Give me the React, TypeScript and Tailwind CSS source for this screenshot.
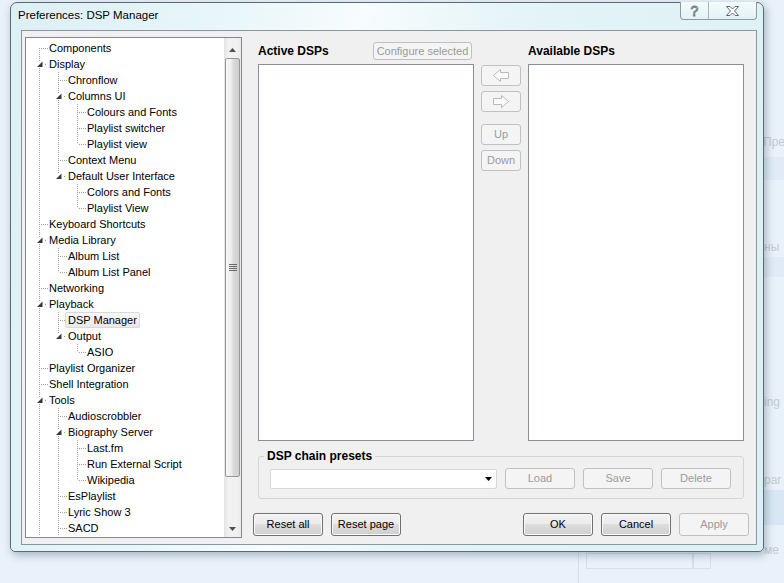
import React from 'react';

type TreeRow = { label: string; level: number; expanded?: boolean; hidden?: boolean; selected?: boolean };

const rows: TreeRow[] = [
  { label: 'Components', level: 0 },
  { label: 'Display', level: 0, expanded: true },
  { label: 'Chronflow', level: 1 },
  { label: 'Columns UI', level: 1, expanded: true },
  { label: 'Colours and Fonts', level: 2 },
  { label: 'Playlist switcher', level: 2 },
  { label: 'Playlist view', level: 2 },
  { label: 'Context Menu', level: 1 },
  { label: 'Default User Interface', level: 1, expanded: true },
  { label: 'Colors and Fonts', level: 2 },
  { label: 'Playlist View', level: 2 },
  { label: 'Keyboard Shortcuts', level: 0 },
  { label: 'Media Library', level: 0, expanded: true },
  { label: 'Album List', level: 1 },
  { label: 'Album List Panel', level: 1 },
  { label: 'Networking', level: 0 },
  { label: 'Playback', level: 0, expanded: true },
  { label: 'DSP Manager', level: 1, selected: true },
  { label: 'Output', level: 1, expanded: true },
  { label: 'ASIO', level: 2 },
  { label: 'Playlist Organizer', level: 0 },
  { label: 'Shell Integration', level: 0 },
  { label: 'Tools', level: 0, expanded: true },
  { label: 'Audioscrobbler', level: 1 },
  { label: 'Biography Server', level: 1, expanded: true },
  { label: 'Last.fm', level: 2 },
  { label: 'Run External Script', level: 2 },
  { label: 'Wikipedia', level: 2 },
  { label: 'EsPlaylist', level: 1 },
  { label: 'Lyric Show 3', level: 1 },
  { label: 'SACD', level: 1 },
  // scrolled out of view, only here so the guide lines keep going
  { label: '', level: 1, hidden: true },
  { label: '', level: 0, hidden: true },
];

// is there a later sibling at depth d before the branch closes?
function continues(i: number, d: number) {
  for (let j = i + 1; j < rows.length; j++) {
    if (rows[j].level <= d) return rows[j].level === d;
  }
  return false;
}

const dot = { stroke: '#a0a0a0', strokeDasharray: '1 1', shapeRendering: 'crispEdges' as const };

function Guides({ i }: { i: number }) {
  const row = rows[i];
  const w = (row.level + 1) * 19 + 1;
  const cx = row.level * 19 + 13.5;
  const lines: React.ReactNode[] = [];
  for (let d = 0; d < row.level; d++) {
    if (continues(i, d)) lines.push(<line key={d} x1={d * 19 + 13.5} y1={0} x2={d * 19 + 13.5} y2={16} {...dot} />);
  }
  const below = continues(i, row.level);
  if (row.expanded) {
    lines.push(<line key="t" x1={cx} y1={0} x2={cx} y2={5} {...dot} />);
    if (below) lines.push(<line key="b" x1={cx} y1={12} x2={cx} y2={16} {...dot} />);
    lines.push(<polygon key="tri" points={`${cx + 3},5.5 ${cx + 3},11 ${cx - 2.5},11`} fill="#3a3a3a" />);
    lines.push(<rect key="d" x={w - 1} y={8} width={1} height={1} fill="#a0a0a0" />);
  } else {
    if (i > 0) lines.push(<line key="t" x1={cx} y1={0} x2={cx} y2={8} {...dot} />);
    if (below) lines.push(<line key="b" x1={cx} y1={8} x2={cx} y2={16} {...dot} />);
    lines.push(<line key="h" x1={cx + 1} y1={8.5} x2={w + 2} y2={8.5} {...dot} />);
  }
  return (
    <svg width={w} height={16} className="shrink-0 overflow-visible">
      {lines}
    </svg>
  );
}

function Tree() {
  return (
    <div className="flex h-[501px] w-[217px] shrink-0 border border-[#828790] bg-white">
      <div className="flex-1 overflow-hidden pt-[2px]">
        {rows.map((r, i) =>
          r.hidden ? null : (
            <div key={i} className="flex h-[16px] items-center">
              <Guides i={i} />
              <span
                className={`relative z-10 h-[16px] whitespace-nowrap rounded-[2px] border px-[2px] text-[11px] leading-[14px] text-black ${
                  r.selected ? 'border-[#d9d9d9] bg-[linear-gradient(to_bottom,#f8f8f8,#e9e9e9)]' : 'border-transparent'
                }`}
              >
                {r.label}
              </span>
            </div>
          )
        )}
      </div>
      <Scrollbar />
    </div>
  );
}

function Scrollbar() {
  return (
    <div className="flex w-[17px] flex-col bg-[linear-gradient(to_right,#e3e3e3,#f1f1f1_25%,#f1f1f1_75%,#e9e9e9)]">
      <div className="flex h-[17px] justify-center pt-[10px]">
        <svg width="7" height="4">
          <polygon points="3.5,0 7,4 0,4" fill="#4f4f4f" />
        </svg>
      </div>
      <div className="flex-1 px-[1px] pb-[43px] pt-[3px]">
        <div className="flex h-full items-center justify-center rounded-[2px] border border-[#979797] bg-[linear-gradient(to_right,#f6f6f6,#ececec_45%,#dadada_55%,#cfcfcf)]">
          <svg width="8" height="7">
            {[0.5, 2.5, 4.5, 6.5].map((y) => (
              <line key={y} x1={0} y1={y} x2={8} y2={y} stroke="#6a6a6a" shapeRendering="crispEdges" />
            ))}
          </svg>
        </div>
      </div>
      <div className="flex h-[17px] justify-center pt-[7px]">
        <svg width="7" height="4">
          <polygon points="0,0 7,0 3.5,4" fill="#4f4f4f" />
        </svg>
      </div>
    </div>
  );
}

function Btn({ children, disabled, className = '' }: { children: React.ReactNode; disabled?: boolean; className?: string }) {
  return (
    <button
      type="button"
      className={`flex shrink-0 items-center justify-center rounded-[3px] border text-[11px] ${
        disabled
          ? 'border-[#bcc1c4] bg-[#f4f4f4] text-[#9b9b9b]'
          : 'border-[#707070] bg-[linear-gradient(to_bottom,#f2f2f2_0%,#ebebeb_50%,#dddddd_50%,#cfcfcf_100%)] text-black shadow-[inset_0_0_0_1px_#fbfbfb]'
      } ${className}`}
    >
      {children}
    </button>
  );
}

function HollowArrow({ dir }: { dir: 'left' | 'right' }) {
  return (
    <svg width="16" height="13" className={dir === 'right' ? '-scale-x-100' : ''}>
      <polygon points="0.5,6.5 7.5,0.5 7.5,3.5 15.5,3.5 15.5,9.5 7.5,9.5 7.5,12.5" fill="#fbfbfb" stroke="#b9b9b9" />
    </svg>
  );
}

function ListBox() {
  return <div className="h-[377px] w-[216px] border border-[#8a8f97] bg-white" />;
}

function DspPanel() {
  return (
    <div className="flex flex-1 flex-col pt-[11px]">
      <div className="flex pl-[16px]">
        <div className="flex w-[216px] flex-col">
          <div className="flex h-[22px] items-start justify-between pr-[2px]">
            <span className="flex h-[18px] items-center text-[12px] font-bold">Active DSPs</span>
            <Btn disabled className="h-[18px] w-[99px]">
              Configure selected
            </Btn>
          </div>
          <ListBox />
        </div>
        <div className="flex w-[54px] flex-col pl-[7px] pt-[23px]">
          <Btn disabled className="h-[21px] w-[40px]">
            <HollowArrow dir="left" />
          </Btn>
          <Btn disabled className="mt-[5px] h-[21px] w-[40px]">
            <HollowArrow dir="right" />
          </Btn>
          <Btn disabled className="mt-[12px] h-[21px] w-[40px]">
            Up
          </Btn>
          <Btn disabled className="mt-[5px] h-[21px] w-[40px]">
            Down
          </Btn>
        </div>
        <div className="flex w-[216px] flex-col">
          <div className="flex h-[22px] items-start">
            <span className="flex h-[18px] items-center text-[12px] font-bold">Available DSPs</span>
          </div>
          <ListBox />
        </div>
      </div>

      <fieldset className="ml-[16px] mt-[8px] w-[486px] rounded-[3px] border border-[#d5d5d5] px-0 pb-[9px] pt-[5px]">
        <legend className="ml-[5px] px-[3px] text-[12px] font-bold leading-[14px]">DSP chain presets</legend>
        <div className="flex items-center pl-[11px]">
          <div className="flex h-[20px] w-[227px] items-center justify-end rounded-[2px] border border-[#d8d8d8] bg-white pr-[4px]">
            <svg width="7" height="4">
              <polygon points="0,0 7,0 3.5,4" fill="#000" />
            </svg>
          </div>
          <Btn disabled className="ml-[8px] h-[21px] w-[70px]">
            Load
          </Btn>
          <Btn disabled className="ml-[8px] h-[21px] w-[70px]">
            Save
          </Btn>
          <Btn disabled className="ml-[8px] h-[21px] w-[70px]">
            Delete
          </Btn>
        </div>
      </fieldset>

      <div className="mt-[14px] flex items-center justify-between pl-[11px] pr-[7px]">
        <div className="flex gap-[8px]">
          <Btn className="h-[23px] w-[70px]">Reset all</Btn>
          <Btn className="h-[23px] w-[70px]">Reset page</Btn>
        </div>
        <div className="flex gap-[8px]">
          <Btn className="h-[23px] w-[70px]">OK</Btn>
          <Btn className="h-[23px] w-[70px]">Cancel</Btn>
          <Btn disabled className="h-[23px] w-[70px]">
            Apply
          </Btn>
        </div>
      </div>
    </div>
  );
}

function CaptionButtons() {
  return (
    <div className="-mt-px mr-[6px] flex h-[18px] self-start overflow-hidden rounded-b-[4px] border border-t-0 border-[#8d9aa3] bg-[linear-gradient(to_bottom,#f4fbfc,#e4f2f5)]">
      <div className="flex w-[28px] items-center justify-center border-r border-[#a9b5bc] text-[14px] leading-none text-white [-webkit-text-stroke:0.8px_#5d6b75]">
        ?
      </div>
      <div className="flex w-[47px] items-center justify-center">
        <svg width="13" height="10" viewBox="0 0 13 10">
          <polygon
            points="0.5,0.5 4,0.5 6.5,3 9,0.5 12.5,0.5 8.5,5 12.5,9.5 9,9.5 6.5,7 4,9.5 0.5,9.5 4.5,5"
            fill="#fff"
            stroke="#5d6b75"
          />
        </svg>
      </div>
    </div>
  );
}

function Backdrop() {
  return (
    <div className="absolute inset-0 text-[12px] text-[#c3ccd3]">
      <div className="absolute left-[755px] top-[157px] h-[23px] w-[40px] bg-[#e0ebf6]" />
      <div className="absolute left-[755px] top-[257px] h-[20px] w-[40px] bg-[#e0ebf6]" />
      <div className="absolute left-[578px] top-[490px] h-[35px] w-[210px] bg-[#d9e7f5]" />
      <span className="absolute left-[763px] top-[133px]">Пре</span>
      <span className="absolute left-[764px] top-[238px]">ны</span>
      <span className="absolute left-[764px] top-[393px]">ing</span>
      <span className="absolute left-[764px] top-[471px]">par</span>
      <span className="absolute left-[764px] top-[541px]">ме</span>
      <div className="absolute left-[578px] top-[545px] h-[40px] w-px bg-[#d4e0ea]" />
      <div className="absolute left-[586px] top-[553px] h-[16px] w-[107px] border border-[#d4e0ea]" />
      <div className="absolute left-[693px] top-[553px] h-[16px] w-[18px] border border-[#d4e0ea]" />
    </div>
  );
}

export default function App() {
  return (
    <div className="relative h-[583px] w-[784px] overflow-hidden bg-[#e9f2fa] pl-[10px] pt-[2px] font-['Liberation_Sans',Arial,sans-serif] text-black">
      <Backdrop />
      <div className="relative flex h-[550px] w-[754px] flex-col rounded-b-[5px] rounded-t-[7px] border border-[#5c6c76] bg-[linear-gradient(100deg,#dcf0f5_0%,#e8f6f9_25%,#f7fcfd_42%,#e4f4f7_60%,#dcf1f5_100%)] shadow-[2px_3px_8px_rgba(40,60,80,0.35)]">
        <div className="flex h-[27px] shrink-0 items-center">
          <span className="pb-[2px] pl-[7px] text-[11.5px]">Preferences: DSP Manager</span>
          <div className="flex-1" />
          <CaptionButtons />
        </div>
        <div className="ml-[10px] mr-[6px] flex h-[515px] border border-[#8b979f] bg-[#f0f0f0]">
          <div className="pl-[3px] pt-[6px]">
            <Tree />
          </div>
          <DspPanel />
        </div>
      </div>
    </div>
  );
}
